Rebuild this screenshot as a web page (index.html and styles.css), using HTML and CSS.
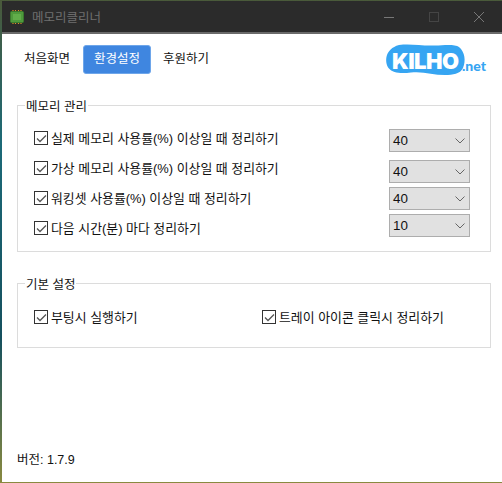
FILE: index.html
```html
<!DOCTYPE html>
<html lang="ko">
<head>
  <meta charset="UTF-8" />
  <title>메모리클리너</title>
  <link rel="stylesheet" href="styles.css">
</head>
<body>
  <div class="window">
    <div class="titlebar">
      <svg class="app-icon" width="14" height="14" viewBox="0 0 14 14">
        <path d="M3 0v2M5.500 0v2M8.500 0v2M11 0v2M3 12v2M5.500 12v2M8.500 12v2M11 12v2" stroke="#d9902a" stroke-width="1.200"/>
        <rect x="0.500" y="1.500" width="13" height="11" rx="1" fill="#4f9a3c" stroke="#3a7a2d"/>
        <rect x="3" y="4" width="8" height="6" fill="#62ad4a"/>
      </svg>
      <span class="title">메모리클리너</span>
      <div class="controls">
        <svg width="10" height="10" viewBox="0 0 10 10"><path d="M0 5.500h10" stroke="#777"/></svg>
        <svg width="10" height="10" viewBox="0 0 10 10"><rect x="0.500" y="0.500" width="9" height="9" fill="none" stroke="#454545"/></svg>
        <svg width="10" height="10" viewBox="0 0 10 10"><path d="M0 0l10 10M10 0L0 10" stroke="#777"/></svg>
      </div>
    </div>

    <div class="content">
      <div class="topbar">
        <nav class="tabs">
          <a class="tab">처음화면</a>
          <a class="tab active">환경설정</a>
          <a class="tab">후원하기</a>
        </nav>
        <svg class="logo" width="106" height="32" viewBox="0 0 106 32">
          <path d="M14 1C26 -0.500 36 2 50 1.500C60 1 70 0 74 3C80 8 81 17 78 24C75 30 68 31 60 31C48 31 38 27 26 28.500C18 29.500 8 30 3.500 24C-0.500 18 -0.500 5 14 1Z" fill="#36a5f2"/>
          <text class="logo-main" x="7" y="24.500">KILHO</text>
          <text class="logo-net" x="77" y="27">.net</text>
        </svg>
      </div>

      <fieldset class="group memory">
        <legend>메모리 관리</legend>
        <div class="memory-body">
          <div class="checks">
            <label class="check-row"><span class="check"><svg width="11" height="11" viewBox="0 0 11 11"><path d="M1 5.500l3 3 6-6" fill="none" stroke="#555" stroke-width="1.300"/></svg></span>실제 메모리 사용률(%) 이상일 때 정리하기</label>
            <label class="check-row"><span class="check"><svg width="11" height="11" viewBox="0 0 11 11"><path d="M1 5.500l3 3 6-6" fill="none" stroke="#555" stroke-width="1.300"/></svg></span>가상 메모리 사용률(%) 이상일 때 정리하기</label>
            <label class="check-row"><span class="check"><svg width="11" height="11" viewBox="0 0 11 11"><path d="M1 5.500l3 3 6-6" fill="none" stroke="#555" stroke-width="1.300"/></svg></span>워킹셋 사용률(%) 이상일 때 정리하기</label>
            <label class="check-row"><span class="check"><svg width="11" height="11" viewBox="0 0 11 11"><path d="M1 5.500l3 3 6-6" fill="none" stroke="#555" stroke-width="1.300"/></svg></span>다음 시간(분) 마다 정리하기</label>
          </div>
          <div class="selects">
            <div class="select first">40<svg width="10" height="6" viewBox="0 0 10 6"><path d="M0.500 0.500l4.500 4.500 4.500-4.500" fill="none" stroke="#666"/></svg></div>
            <div class="select">40<svg width="10" height="6" viewBox="0 0 10 6"><path d="M0.500 0.500l4.500 4.500 4.500-4.500" fill="none" stroke="#666"/></svg></div>
            <div class="select">40<svg width="10" height="6" viewBox="0 0 10 6"><path d="M0.500 0.500l4.500 4.500 4.500-4.500" fill="none" stroke="#666"/></svg></div>
            <div class="select">10<svg width="10" height="6" viewBox="0 0 10 6"><path d="M0.500 0.500l4.500 4.500 4.500-4.500" fill="none" stroke="#666"/></svg></div>
          </div>
        </div>
      </fieldset>

      <fieldset class="group basic">
        <legend>기본 설정</legend>
        <div class="basic-body">
          <label class="check-row boot"><span class="check"><svg width="11" height="11" viewBox="0 0 11 11"><path d="M1 5.500l3 3 6-6" fill="none" stroke="#555" stroke-width="1.300"/></svg></span>부팅시 실행하기</label>
          <label class="check-row"><span class="check"><svg width="11" height="11" viewBox="0 0 11 11"><path d="M1 5.500l3 3 6-6" fill="none" stroke="#555" stroke-width="1.300"/></svg></span>트레이 아이콘 클릭시 정리하기</label>
        </div>
      </fieldset>

      <div class="version">버전: 1.7.9</div>
    </div>
  </div>
</body>
</html>
```

FILE: styles.css
```css
html, body {
  height: 100%;
}

body {
  margin: 0;
  overflow: hidden;
  font-family: "Liberation Sans", "Noto Sans CJK KR", sans-serif;
  font-size: 12.9px;
  color: #111;
  background: linear-gradient(to bottom, #4a5a3a 0, #1c6a78 30%, #15505e 70%, #8a8a40 100%);
}

.window {
  margin: 1px 0 1px 2px;
  height: 481px;
  display: flex;
  flex-direction: column;
  background: white;
}

/* Title bar */
.titlebar {
  height: 31px;
  flex: none;
  display: flex;
  align-items: center;
  background: #2b2b2b;
  border-bottom: 2px solid #6a6a6a;
  padding-left: 8px;
}

.app-icon {
  margin-right: 8px;
}

.title {
  color: #6f6f6f;
  font-size: 12.5px;
}

.controls {
  margin-left: auto;
  display: flex;
  gap: 35px;
  padding-right: 18px;
}

/* Content */
.content {
  flex: 1;
  display: flex;
  flex-direction: column;
  padding: 0 11px 0 15px;
}

.topbar {
  display: flex;
  align-items: flex-start;
  justify-content: space-between;
  height: 62px;
}

.tabs {
  display: flex;
  margin-top: 11px;
  margin-left: 6px;
  font-size: 12.5px;
}

.tab {
  height: 29px;
  line-height: 27px;
  box-sizing: border-box;
  padding: 0 11px;
  color: #111;
  border: 1px solid transparent;
  border-radius: 3px;
}

.tab:first-child {
  padding: 0 12px 0 0;
}

.tab.active {
  padding: 0 10px;
  background: #3f86e0;
  border-color: #6ea6ea;
  color: white;
}

.logo {
  margin-top: 10px;
  overflow: visible;
}

.logo-main {
  font-family: Inter, sans-serif;
  font-weight: 900;
  font-size: 22px;
  fill: white;
  letter-spacing: -0.5px;
}

.logo-net {
  font-family: Lato, sans-serif;
  font-weight: 900;
  font-size: 14px;
  fill: #36a5f2;
}

.group {
  margin: 0;
  padding: 0 0 0 16px;
  border: 1px solid #dcdcdc;
  box-sizing: border-box;
}

.group legend {
  margin-left: -9px;
  padding: 0 1px;
  font-size: 12.5px;
}

.memory {
  height: 156px;
}

.basic {
  height: 74px;
  margin-top: 22px;
}

.memory-body {
  display: flex;
  justify-content: space-between;
  padding-right: 20px;
}

.checks {
  display: flex;
  flex-direction: column;
  gap: 12px;
  padding-top: 14px;
}

.check-row {
  display: flex;
  align-items: center;
  height: 18px;
  box-sizing: border-box;
  padding-bottom: 2px;
}

.check {
  width: 12px;
  height: 12px;
  flex: none;
  margin-right: 3px;
  margin-bottom: -2px;
  border: 1px solid #333;
  display: flex;
  align-items: center;
  justify-content: center;
  background: white;
}

.selects {
  display: flex;
  flex-direction: column;
  gap: 4px;
  padding-top: 14px;
}

.select {
  width: 81px;
  height: 23px;
  box-sizing: border-box;
  display: flex;
  align-items: center;
  justify-content: space-between;
  padding: 0 4px 0 3px;
  background: #e1e1e1;
  border: 1px solid #adadad;
  font-size: 13.4px;
}

.select.first {
  margin-bottom: 4px;
}

.basic-body {
  display: flex;
  padding-top: 15px;
}

.boot {
  width: 228px;
}

.version {
  margin-top: auto;
  margin-bottom: 14px;
  font-size: 12.5px;
}
```
